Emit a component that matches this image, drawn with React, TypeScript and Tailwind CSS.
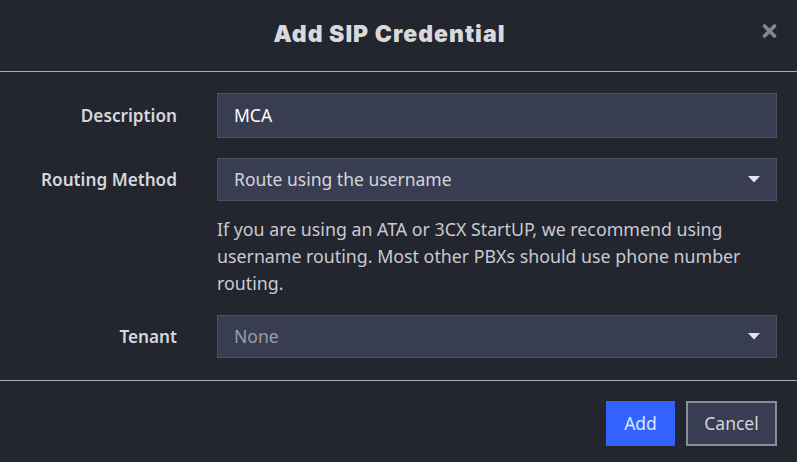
const body = { fontFamily: '"Noto Sans", "Open Sans", sans-serif' };

function Caret() {
  return (
    <svg width="12" height="7" viewBox="0 0 12 7" className="shrink-0">
      <path d="M0 0h12L6 6.5z" fill="#e4e6ee" />
    </svg>
  );
}

export default function App() {
  return (
    <div className="w-[797px] h-[462px] bg-[#23252f] flex flex-col overflow-hidden" style={body}>
      {/* Header */}
      <div className="relative h-[72px] shrink-0 flex items-center justify-center border-b border-[#a9abb0]">
        <h2
          className="text-[23px] font-black text-[#d9d9dc] tracking-[1px] ml-[-18px] mt-[-2px]"
          style={{ fontFamily: '"Inter", "Open Sans", sans-serif' }}
        >
          Add SIP Credential
        </h2>
        <button className="absolute right-[20px] top-[23px] text-[#85878f]" aria-label="Close">
          <svg width="15" height="16" viewBox="0 0 15 16">
            <path d="M2.5 3l10 10M12.5 3l-10 10" stroke="currentColor" strokeWidth="3.6" strokeLinecap="round" />
          </svg>
        </button>
      </div>

      {/* Form */}
      <div className="flex-1 grid grid-cols-[177px_1fr] gap-x-[40px] pr-[20px] pt-[21px] content-start">
        <label className="text-[17.2px] font-semibold text-[#d6d7db] text-right self-center">Description</label>
        <div className="h-[45px] bg-[#393d51] border border-[#4b5068] flex items-center px-[16px] text-[17.5px] text-white">
          MCA
        </div>

        <label className="text-[17.2px] font-semibold text-[#d6d7db] text-right self-center mt-[20px]">
          Routing Method
        </label>
        <div className="mt-[20px] h-[43px] bg-[#393d51] border border-[#4b5068] flex items-center justify-between pl-[16px] pr-[16px] text-[17.5px] text-[#d4d5da]">
          <span>Route using the username</span>
          <Caret />
        </div>

        <div />
        <p className="mt-[15px] text-[17.8px] leading-[27px] text-[#c9cad0] pr-[20px]">
          If you are using an ATA or 3CX StartUP, we recommend using username routing. Most other PBXs should use phone number routing.
        </p>

        <label className="text-[17.2px] font-semibold text-[#d6d7db] text-right self-center mt-[18px]">Tenant</label>
        <div className="mt-[18px] h-[43px] bg-[#393d51] border border-[#4b5068] flex items-center justify-between pl-[16px] pr-[16px] text-[17.5px] text-[#9a9ca6]">
          <span>None</span>
          <Caret />
        </div>
      </div>

      {/* Footer */}
      <div className="h-[82px] shrink-0 border-t border-[#a9abb0] flex items-start justify-end gap-[11px] pr-[20px] pt-[20px]">
        <button className="h-[45px] w-[69px] bg-[#3363ff] text-[#dfe5ff] text-[17.5px]">Add</button>
        <button className="h-[45px] w-[91px] bg-[#393d51] border-2 border-[#8c8d92] text-[#d4d5da] text-[17.5px]">
          Cancel
        </button>
      </div>
    </div>
  );
}
